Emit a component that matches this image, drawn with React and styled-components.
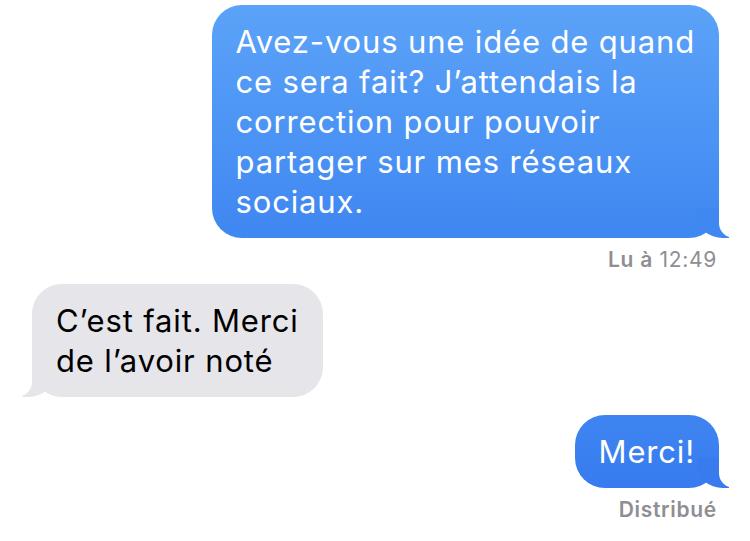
import styled, { createGlobalStyle } from "styled-components"

const Global = createGlobalStyle`
  body {
    margin: 0;
    background: #ffffff;
    font-family: Inter, "Liberation Sans", sans-serif;
  }
`

const Thread = styled.div`
  width: 750px;
  height: 541px;
  box-sizing: border-box;
  padding: 5px 31px 0 32px;
  display: flex;
  flex-direction: column;
  overflow: hidden;
`

const Bubble = styled.div`
  position: relative;
  align-self: ${p => (p.$me ? "flex-end" : "flex-start")};
  box-sizing: border-box;
  padding: 17px 24px 16px;
  border-radius: 30px;
  font-size: 31px;
  line-height: 40px;
  letter-spacing: 0.85px;
  color: ${p => (p.$me ? "#ffffff" : "#000000")};
  background: ${p => p.$bg};
  margin-top: ${p => p.$top || 0}px;

  &::before {
    content: "";
    position: absolute;
    bottom: 0;
    ${p => (p.$me ? "right: -10px;" : "left: -10px;")}
    width: 32px;
    height: 30px;
    background: ${p => p.$tail};
    ${p => (p.$me ? "border-bottom-left-radius: 26px 22px;" : "border-bottom-right-radius: 26px 22px;")}
  }

  &::after {
    content: "";
    position: absolute;
    bottom: 0;
    ${p => (p.$me ? "right: -40px;" : "left: -40px;")}
    width: 40px;
    height: 30px;
    background: #ffffff;
    ${p => (p.$me ? "border-bottom-left-radius: 15px;" : "border-bottom-right-radius: 15px;")}
  }
`

const Status = styled.div`
  align-self: flex-end;
  margin-top: ${p => p.$top}px;
  margin-right: 2px;
  font-size: 21px;
  line-height: 24px;
  letter-spacing: 0.7px;
  color: #8e8e93;

  b {
    font-weight: 600;
  }
`

function App() {
  return (
    <>
      <Global />
      <Thread>
        <Bubble $me $bg="linear-gradient(180deg, #5ba3f8 0%, #3f87f1 100%)" $tail="#3f87f1">
          Avez-vous une idée de quand<br />
          ce sera fait? J’attendais la<br />
          correction pour pouvoir<br />
          partager sur mes réseaux<br />
          sociaux.
        </Bubble>
        <Status $top={10}>
          <b>Lu à</b> 12:49
        </Status>
        <Bubble $bg="#e5e5ea" $tail="#e5e5ea" $top={12}>
          C’est fait. Merci<br />
          de l’avoir noté
        </Bubble>
        <Bubble $me $bg="linear-gradient(180deg, #3f85f1 0%, #377bef 100%)" $tail="#377bef" $top={18}>
          Merci!
        </Bubble>
        <Status $top={10}>
          <b>Distribué</b>
        </Status>
      </Thread>
    </>
  )
}

export default App
